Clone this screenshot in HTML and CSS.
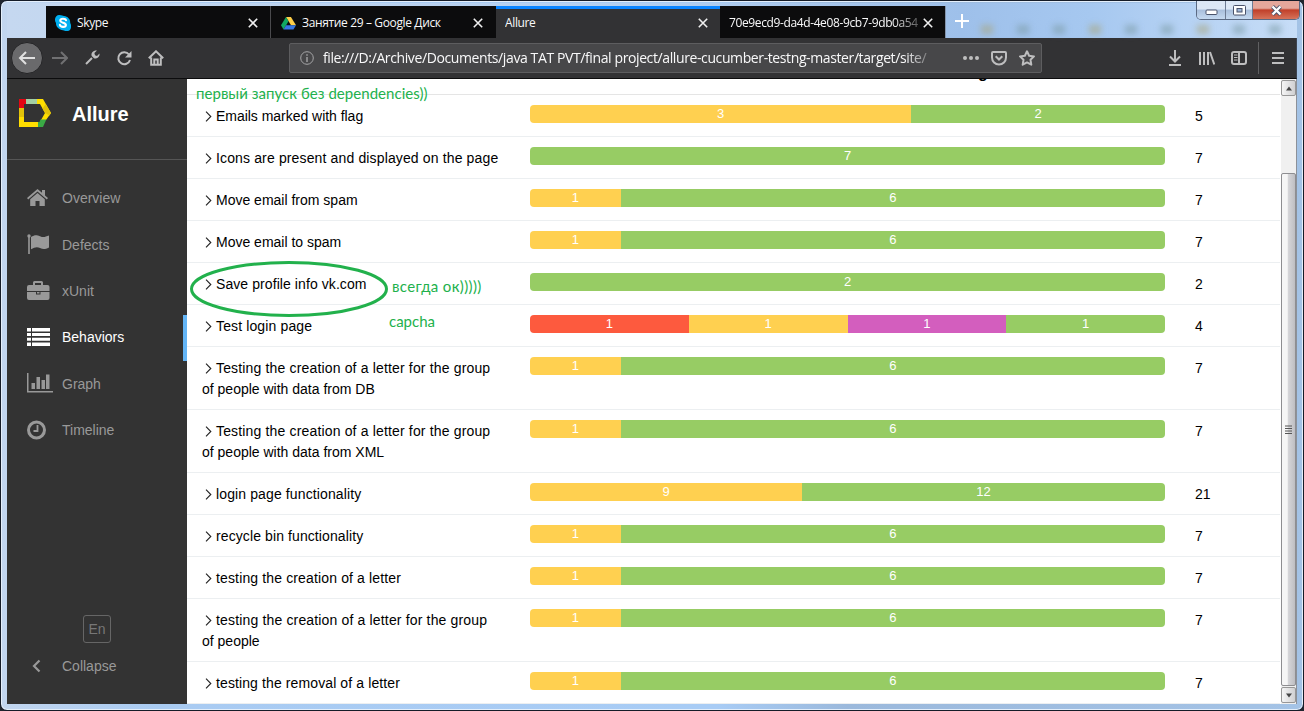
FILE: index.html
```
<!DOCTYPE html>
<html lang="en">
<head>
<meta charset="utf-8">
<title>Allure</title>
<link rel="stylesheet" href="styles.css">
<script src="app.js" defer></script>
</head>
<body>
<div class="window">
  <header class="titlebar">
    <div class="tabs">
      <div class="tab">
        <svg class="favicon" viewBox="0 0 16 16"><path d="M4.5 0C7 0 7.500 .8 9 1c4 .4 6.500 3.500 6.200 7 .9 1.500 1 3 .8 4.500A4.200 4.200 0 0 1 11.500 16c-1.500 0-2.300-.7-3.500-.8C4 15 .8 12 1 8 .2 7 0 5.500 0 4.300A4.300 4.300 0 0 1 4.500 0Z" fill="#00aff0"/><path d="M11 5.200C10.500 3.500 5.400 3 5.300 5.600 5.200 8.200 11 7.200 10.900 10c-.1 2.700-5.600 2.400-6-.1" fill="none" stroke="#fff" stroke-width="2.100" stroke-linecap="round"/></svg>
        <span class="tab-name">Skype</span>
        <svg class="close" viewBox="0 0 10 10"><path d="M.8.800 9.200 9.200M9.200.800.800 9.200"/></svg>
      </div>
      <div class="tab">
        <svg class="favicon" viewBox="0 0 16 16"><path d="M5.300 1.500h5.300L16 10.500h-5.300Z" fill="#ffcf48"/><path d="M5.300 1.500 8 6 2.700 15 0 10.500Z" fill="#11a861"/><path d="M5.400 10.500H16L13.300 15H2.700Z" fill="#3777e3"/></svg>
        <span class="tab-name">Занятие 29 – Google Диск</span>
        <svg class="close" viewBox="0 0 10 10"><path d="M.8.800 9.200 9.200M9.200.800.800 9.200"/></svg>
      </div>
      <div class="tab tab-active">
        <span class="tab-name">Allure</span>
        <svg class="close" viewBox="0 0 10 10"><path d="M.8.800 9.200 9.200M9.200.800.800 9.200"/></svg>
      </div>
      <div class="tab tab-last">
        <span class="tab-name fade">70e9ecd9-da4d-4e08-9cb7-9db0a54</span>
        <svg class="close" viewBox="0 0 10 10"><path d="M.8.800 9.200 9.200M9.200.800.800 9.200"/></svg>
      </div>
    </div>
    <svg class="new-tab" viewBox="0 0 14 14"><path d="M7 0v14M0 7h14" stroke="#fff" stroke-width="2"/></svg>
    <div class="glass"><i></i><i></i><i></i><i></i><i></i><i></i><i></i><i></i><i></i></div>
    <div class="controls">
      <div class="control"><svg width="13" height="7" viewBox="0 0 13 7"><rect x="1" y="1" width="11" height="4.500" rx="1" fill="#fff" stroke="#4b536b"/></svg></div>
      <div class="control"><svg width="13" height="11" viewBox="0 0 13 11"><rect x=".5" y=".5" width="12" height="9.500" rx="1" fill="#fff" stroke="#4b536b"/><rect x="4" y="3.500" width="5" height="3.500" fill="#9db5d6" stroke="#4b536b"/></svg></div>
      <div class="control control-close"><svg width="13" height="11" viewBox="0 0 13 11"><path d="M2.500 1.500 10.500 9.500M10.500 1.500 2.500 9.500" stroke="#4b536b" stroke-width="4"/><path d="M2.500 1.500 10.500 9.500M10.500 1.500 2.500 9.500" stroke="#fff" stroke-width="2.400"/></svg></div>
    </div>
  </header>

  <nav class="toolbar">
    <div class="back"><svg width="18" height="16" viewBox="0 0 18 16"><path d="M17 8H2M8 2 2 8l6 6"/></svg></div>
    <svg class="forward" width="16" height="16" viewBox="0 0 16 16"><path d="M0 8h15M9 2l6 6-6 6"/></svg>
    <svg class="tool wrench" width="16" height="16" viewBox="0 0 16 16"><path d="m2 14 6-6" stroke-width="2.200"/><path d="M15.500 3.500 13 6l-2-.7L10.400 3 13 .5C9 .2 6.700 3 7.700 6l2.300 2.300c3 .9 6-1.500 5.500-4.800Z" fill="#bebebf" stroke="none"/></svg>
    <svg class="tool reload" width="16" height="16" viewBox="0 0 16 16"><path d="M13 4.500A6 6 0 1 0 14 10"/><path d="M15.500 1v6.500H9Z" fill="#bebebf" stroke="none"/></svg>
    <svg class="tool home" width="16" height="16" viewBox="0 0 16 16"><path d="m.8 8.300 7.200-7 7.200 7M3.200 7.500v7.200h9.600V7.500"/><path d="M6.300 15V9.500h3.400V15" stroke-width="1.500"/></svg>
    <div class="address">
      <svg class="info" width="14" height="14" viewBox="0 0 14 14"><circle cx="7" cy="7" r="6.300" fill="none" stroke="#a5a5a7"/><path d="M7 6v5M7 3.200v1.500" stroke="#a5a5a7" stroke-width="1.400"/></svg>
      <span class="url">file:///D:/Archive/Documents/java TAT PVT/final project/allure-cucumber-testng-master/target/site/</span>
      <svg class="dots" width="16" height="4" viewBox="0 0 16 4"><circle cx="2" cy="2" r="2"/><circle cx="8" cy="2" r="2"/><circle cx="14" cy="2" r="2"/></svg>
      <svg class="tool" width="16" height="16" viewBox="0 0 16 16"><path d="M2 2h12q1 0 1 1v4.500a7 7 0 0 1-14 0V3q0-1 1-1ZM4.700 6.200 8 9.500l3.300-3.300"/></svg>
      <svg class="tool star" width="16" height="16" viewBox="0 0 16 16"><path d="m8 1.300 2.100 4.400 4.900.7-3.500 3.400.8 4.900L8 12.400l-4.300 2.300.8-4.900L1 6.400l4.900-.7Z" stroke-linejoin="round"/></svg>
    </div>
    <svg class="tool download" width="14" height="16" viewBox="0 0 14 16"><path d="M7 0v11M2 6.500l5 5 5-5M1 15h12"/></svg>
    <svg class="tool library" width="16" height="14" viewBox="0 0 16 14"><path d="M1 1v13M5 1v13M9 1v13M11 1l4.300 12.500"/></svg>
    <svg class="tool panel" width="16" height="14" viewBox="0 0 16 14"><rect x="1" y="1" width="14" height="12" rx="2"/><path d="M8 1v12"/><path d="M3 4h3.500M3 6.500h3.500M3 9h3.500" stroke-width="1"/></svg>
    <i class="divider"></i>
    <svg class="tool menu" width="12" height="12" viewBox="0 0 12 12"><path d="M0 1h12M0 6h12M0 11h12"/></svg>
  </nav>

  <div class="page">
    <aside class="sidebar">
      <div class="brand">
        <svg width="32" height="28" viewBox="0 0 32 28"><path d="M0 9h5v10H0Z" fill="#e2c20a"/><path d="M0 0h7v5H5v4H0Z" fill="#e30613"/><path d="M7 0h11v5H7Z" fill="#a3cfa4"/><path d="M18 0h6l8 14-5 7h-5l4-7-5-9h-3Z" fill="#ffde00"/><path d="m26.800 5 5.200 9-1.500 2.500L26 14l-2.500-4.500Z" fill="#e2c20a"/><path d="M0 18h5v5h14v5H0Z" fill="#ffde00"/><path d="M21.500 20.500h5.800L24 28h-5v-5h1.500Z" fill="#3aaa45"/></svg>
        <span>Allure</span>
      </div>
      <div class="menu-list">
        <div class="item"><svg viewBox="0 0 26 20"><path d="M10.500 1 0 10l1.200 1.500 9.300-7.900 9.300 7.900L21 10l-3-2.600V2h-3v2.800Z"/><path d="m10.500 5-7.300 6.200V18h5.300v-5h4v5h5.300v-6.800Z"/></svg><span>Overview</span></div>
        <div class="item"><svg viewBox="0 0 26 20"><circle cx="2" cy="2" r="1.700"/><path d="M1.200 2h1.600v18H1.200ZM4 3c3.500-2 5-2.500 9-.8 3.500 1.500 5 .8 9-.7v12c-4 2-6 2-9 .5-3-1.400-5.500-.7-9 1.300Z"/></svg><span>Defects</span></div>
        <div class="item"><svg viewBox="0 0 26 20"><path d="M6 4V1.500Q6 0 7.500 0h7Q16 0 16 1.500V4h4.500q2 0 2 2v4H0V6q0-2 2-2ZM8 4h6V2H8ZM0 11h9v2.500h4.500V11h9v6q0 2-2 2H2q-2 0-2-2ZM10 11h2.500v1.500H10Z" fill-rule="evenodd"/></svg><span>xUnit</span></div>
        <div class="item item-active"><svg viewBox="0 0 26 20"><path d="M0 1h4v3.500H0Zm5 0h18v3.500H5ZM0 6h4v3H0Zm5 0h18v3H5Zm-5 4.700h4v3.100H0Zm5 0h18v3.100H5Zm-5 4.800h4V19H0Zm5 0h18V19H5Z"/></svg><span>Behaviors</span></div>
        <div class="item"><svg viewBox="0 0 26 20"><path d="M0 0h1.500v18H26v1.500H0ZM4.500 10h3.500v6H4.500Zm5-6h3.500v12H9.500Zm5 3h3.500v9h-3.500Zm4.500-5.500h3.500V16H19Z"/></svg><span>Graph</span></div>
        <div class="item"><svg viewBox="0 0 26 20"><circle cx="9.500" cy="10" r="8" fill="none" stroke="#999" stroke-width="3"/><path d="M10.500 5v6H6.500" fill="none" stroke="#999" stroke-width="1.800"/></svg><span>Timeline</span></div>
      </div>
      <div class="lang">En</div>
      <div class="collapse"><svg width="9" height="14" viewBox="0 0 9 14"><path d="M7.500 1.500 2 7l5.500 5.500" fill="none" stroke="#999" stroke-width="2.200"/></svg><span>Collapse</span></div>
    </aside>

    <main class="content">
      <div class="heading"><span>g</span></div>
      <div class="rows" id="rows"></div>
    </main>
    <div class="scrollbar">
      <div class="scroll-button"><svg width="8" height="5" viewBox="0 0 8 5"><path d="M4 .5 7 4.500H1Z" fill="#444"/></svg></div>
      <div class="thumb"><svg width="8" height="9" viewBox="0 0 8 9"><path d="M0 1h7M0 3.500h7M0 6h7M0 8.500h7" stroke="#555"/></svg></div>
      <div class="scroll-button"><svg width="8" height="5" viewBox="0 0 8 5"><path d="M1 .5h6L4 4.500Z" fill="#444"/></svg></div>
    </div>
  </div>

  <span class="note note-first">первый запуск без dependencies))</span>
  <span class="note note-ok">всегда ок)))))</span>
  <span class="note note-capcha">capcha</span>
  <svg class="ring" width="200" height="58" viewBox="0 0 200 58"><ellipse cx="100" cy="29" rx="97.500" ry="26.500" fill="none" stroke="#22b14c" stroke-width="3"/></svg>
</div>
</body>
</html>
```

FILE: styles.css
```
* { box-sizing: border-box; }
body { margin: 0; background: #20252e; font: 14px/21px "Liberation Sans", Arial, sans-serif; overflow: hidden; }
svg { display: block; flex: none; }

.window {
  position: relative; width: 1304px; height: 711px; padding: 2px 6px 6px 6px;
  border: 1px solid #151c28; border-radius: 7px;
  background: linear-gradient(90deg, #c2d6ef, #a9cbf2 12%, #a8ccf5 55%, #9bb9dc 65%, #a4c3e6);
  box-shadow: inset 0 0 0 1px #e4effb;
  display: flex; flex-direction: column;
}

.titlebar {
  flex: none; height: 35px; padding: 3px 0 0 39px; display: flex; position: relative;
  background: linear-gradient(90deg, #c5d8f0, #b3cff0 50%, #9ec0ea 74%, #a6c8f0 84%, #c7ddf7);
}
.tabs { display: flex; font: 12px/16px "Open Sans", "Noto Sans", sans-serif; color: #f9f9fa; border-right: 1px solid #8495ad; }
.tab { width: 225px; height: 32px; display: flex; align-items: center; padding: 1px 12px 0 9px; background: #0c0c0d; border-right: 1px solid #4a4a4d; }
.tab:nth-child(2) { border-right: 0; padding: 1px 13px 0 10px; }
.tab-active { background: #323234; border: 0; border-top: 3px solid #0a84ff; padding-top: 0; padding-bottom: 2px; width: 224px; }
.tab-last { border: 0; width: 225px; }
.favicon { width: 16px; height: 16px; margin-right: 6px; }
.tab:nth-child(2) .favicon { width: 15px; }
.tab-name { flex: 1; white-space: nowrap; overflow: hidden; letter-spacing: -.36px; }
.fade { letter-spacing: -.38px; -webkit-mask-image: linear-gradient(90deg, #000 86%, rgba(0, 0, 0, .3)); mask-image: linear-gradient(90deg, #000 86%, rgba(0, 0, 0, .3)); }
.close { width: 10px; height: 10px; margin-left: 4px; stroke: #f0f0f0; stroke-width: 1.6; }
.new-tab { width: 14px; height: 14px; margin: 8px 0 0 9px; }
.glass { display: flex; gap: 24px; padding: 19px 0 0 12px; filter: blur(3px); }
.glass i { width: 12px; height: 9px; background: #7d9da9; opacity: .6; }
.glass i:nth-child(3n+1) { background: #a9a680; }
.controls {
  position: absolute; right: -3px; top: -2px; display: flex; width: 104px; height: 19px;
  border: 1px solid #5b6a83; border-top: 0; border-radius: 0 0 5px 5px; overflow: hidden;
}
.control { width: 27px; display: flex; align-items: center; justify-content: center; border-right: 1px solid #6d7b93; background: linear-gradient(#dce7f5 45%, #a9bfdc 50%, #c5d9f0); }
.control:first-child { width: 29px; padding-top: 4px; }
.control-close { flex: 1; border: 0; background: linear-gradient(#e5a79b 40%, #c0402a 50%, #d6735a); }

.toolbar { flex: none; height: 41px; display: flex; align-items: center; background: #323234; border: 1px solid #3d4450; border-width: 0 1px 1px 0; border-bottom-color: #0c0c0d; padding-left: 4px; }
.back { width: 32px; height: 32px; border: 1px solid #242426; border-radius: 50%; background: #6a6a6c; display: flex; align-items: center; justify-content: center; }
.back path, .forward path, .tool path, .tool rect { fill: none; stroke: #bebebf; stroke-width: 2; }
.tool path[stroke="none"] { fill: #bebebf; stroke: none; }
.tool path[stroke-width="1"] { stroke-width: 1; }
.back path { stroke: #e0e0e0; }
.forward { margin-left: 9px; }
.forward path { stroke: #707072; }
.wrench { margin-left: 16px; }
.reload, .home { margin-left: 16px; }
.address { width: 753px; height: 30px; margin-left: 125px; padding-left: 10px; display: flex; align-items: center; background: #474749; border: 1px solid #5d5d5f; border-radius: 2px; }
.url {
  width: 606px; margin-left: 9px; overflow: hidden; white-space: nowrap; color: #f9f9fa;
  font: 14px/24px "Open Sans", "Noto Sans", sans-serif; letter-spacing: -.39px;
  -webkit-mask-image: linear-gradient(90deg, #000 96%, rgba(0, 0, 0, .25)); mask-image: linear-gradient(90deg, #000 96%, rgba(0, 0, 0, .25));
}
.dots { margin: 0 12px 0 34px; fill: #bebebf; }
.star { margin-left: 12px; }
.download { margin-left: 126px; }
.library { margin-left: 17px; }
.panel { margin-left: 16px; }
.divider { width: 1px; height: 32px; margin: 0 13px 0 11px; background: #606062; }

.page { flex: 1; min-height: 0; display: flex; background: #fff; }
.sidebar { width: 180px; background: #333; color: #999; display: flex; flex-direction: column; }
.brand { height: 81px; display: flex; gap: 21px; padding: 19px 0 0 12px; border-bottom: 1px solid #555; color: #fff; font-size: 20px; font-weight: bold; line-height: 32px; }
.brand svg { margin-top: 1px; }
.menu-list { padding-top: 15.6px; }
.item { display: flex; align-items: center; height: 46.4px; padding-left: 20px; gap: 9px; }
.item svg { width: 26px; height: 20px; margin-top: -2px; fill: #999; }
.item-active { color: #fff; border-right: 4px solid #64b5f6; }
.item-active svg { fill: #fff; }
.lang { width: 28px; height: 28px; margin: auto 0 0 76px; border: 1px solid #666; border-radius: 3px; text-align: center; line-height: 26px; color: #777; }
.collapse { display: flex; align-items: center; gap: 21px; margin: 13px 0 27px 25px; }
.collapse svg { margin-top: -1px; }

.content { flex: 1; min-width: 0; overflow: hidden; padding-right: 1px; }
.heading { height: 16px; border-bottom: 1px solid #e5e5e5; overflow: hidden; padding-left: 791px; font-size: 16px; font-weight: bold; line-height: 20px; }
.heading span { display: block; margin-top: -16px; }
.row { display: flex; align-items: flex-start; padding: 10px 0 10px 15px; border-bottom: 1px solid #eceff1; color: #000; }
.name { width: 328px; padding: 1px 28px 0 0; margin-bottom: -1px; flex: none; }
.name::first-line { letter-spacing: var(--tracking); }
.name svg { display: inline-block; vertical-align: -1px; margin: 0 4px 0 3px; }
.bar { width: 635px; height: 18px; display: flex; border-radius: 4px; overflow: hidden; color: #fff; font-size: 13px; line-height: 17px; text-align: center; }
.broken { background: #ffd050; }
.passed { background: #97cc64; }
.failed { background: #fd5a3e; }
.unknown { background: #d35ebe; }
.total { padding: 1px 0 0 30px; margin-bottom: -1px; }

.scrollbar { width: 16px; border-right: 1px solid #8c9199; background: #f0f0f0; display: flex; flex-direction: column; }
.scroll-button { height: 16px; margin-top: 1px; border: 1px solid #979797; border-radius: 2px; background: linear-gradient(90deg, #f5f5f5, #d0d0d2); display: flex; align-items: center; justify-content: center; }
.scroll-button:last-child { margin-bottom: 1px; }
.thumb { flex: 1; margin-top: 77px; border: 1px solid #8e8e91; border-radius: 2px; background: linear-gradient(90deg, #f6f6f6 40%, #d5d5d8 50%, #bebec2); display: flex; align-items: center; justify-content: center; }

.note { position: absolute; color: #22b14c; font: 15px/20px Lato, "Open Sans", sans-serif; white-space: nowrap; }
.note-first { left: 195px; top: 82px; letter-spacing: .04px; }
.note-ok { left: 391px; top: 275px; letter-spacing: .37px; }
.note-capcha { left: 388px; top: 310px; }
.ring { position: absolute; left: 188px; top: 259px; }
```

FILE: app.js
```
// name, counts per status, tracking of the name's first line in pixels
const features = [
  ["Emails marked with flag", { broken: 3, passed: 2 }, -.03],
  ["Icons are present and displayed on the page", { passed: 7 }, .14],
  ["Move email from spam", { broken: 1, passed: 6 }, 0],
  ["Move email to spam", { broken: 1, passed: 6 }, 0],
  ["Save profile info vk.com", { passed: 2 }, .08],
  ["Test login page", { failed: 1, broken: 1, unknown: 1, passed: 1 }, .13],
  ["Testing the creation of a letter for the group of people with data from DB", { broken: 1, passed: 6 }, .16],
  ["Testing the creation of a letter for the group of people with data from XML", { broken: 1, passed: 6 }, .16],
  ["login page functionality", { broken: 9, passed: 12 }, .12],
  ["recycle bin functionality", { broken: 1, passed: 6 }, .1],
  ["testing the creation of a letter", { broken: 1, passed: 6 }, .14],
  ["testing the creation of a letter for the group of people", { broken: 1, passed: 6 }, .16],
  ["testing the removal of a letter", { broken: 1, passed: 6 }, .11]
];

const chevron = '<svg width="7" height="11" viewBox="0 0 7 11"><path d="M1 .7 5.800 5.500 1 10.300" fill="none" stroke="#222" stroke-width="1.100"/></svg>';

document.getElementById("rows").innerHTML = features.map(([name, counts, tracking]) => {
  const total = Object.values(counts).reduce((a, b) => a + b, 0);
  const segments = Object.entries(counts)
    .map(([status, n]) => `<span class="${status}" style="width:${n / total * 100}%">${n}</span>`)
    .join("");
  return `<div class="row"><div class="name" style="--tracking:${tracking}px">${chevron}${name}</div><div class="bar">${segments}</div><div class="total">${total}</div></div>`;
}).join("");
```
